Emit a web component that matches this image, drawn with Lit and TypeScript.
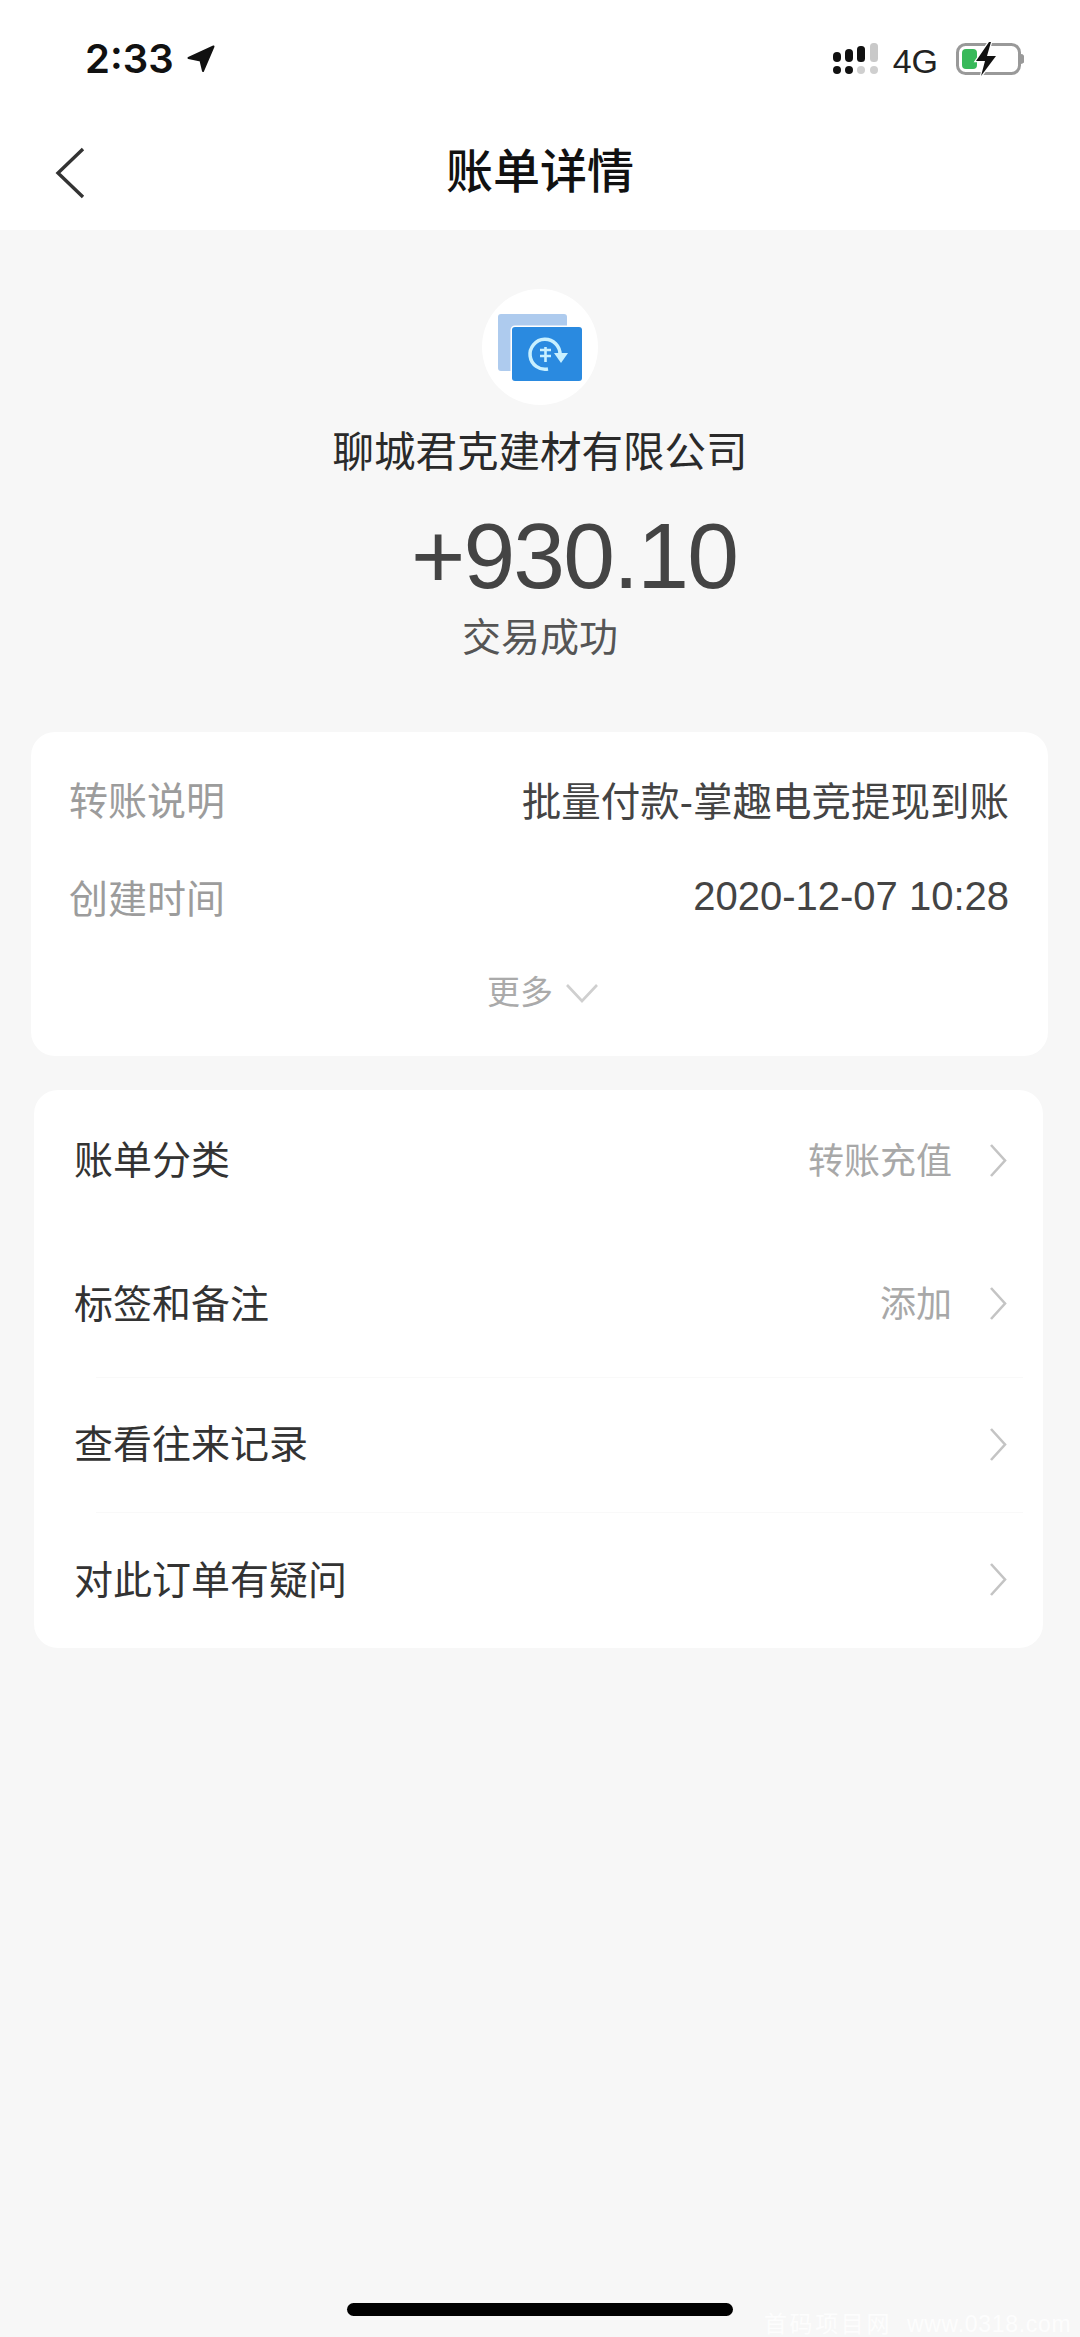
import { LitElement, html, css, svg } from "lit";
import { customElement } from "lit/decorators.js";

const chevronRight = svg`<path d="M2 1 L16 16.5 L2 32" fill="none" stroke="#c4c4c4" stroke-width="2.6"/>`;

interface Row { label: string; value?: string; cls: string; }
const ROWS: Row[] = [
  { label: "账单分类", value: "转账充值", cls: "r1" },
  { label: "标签和备注", value: "添加", cls: "r2" },
  { label: "查看往来记录", cls: "r3 line" },
  { label: "对此订单有疑问", cls: "r4 line" },
];

@customElement("app-root")
export class AppRoot extends LitElement {
  static styles = css`
    :host {
      display: flex;
      flex-direction: column;
      width: 1080px;
      height: 2337px;
      position: relative;
      overflow: hidden;
      background: #f7f7f7;
      font-family: "Liberation Sans", "Noto Sans CJK SC", sans-serif;
      color: #333;
    }
    .top { background: #fff; height: 230px; display: flex; flex-direction: column; flex: none; }
    .status { height: 118px; display: flex; justify-content: space-between; padding: 42px 56px 0 85px; box-sizing: border-box; }
    .time-wrap { display: flex; gap: 13px; height: 34px; align-items: center; }
    .time { font-family: Inter, "Liberation Sans", sans-serif; font-size: 40px; font-weight: 600; color: #111; line-height: 34px; letter-spacing: 0; }
    .sys { display: flex; height: 34px; align-items: center; }
    .net { font-size: 34px; color: #222; margin: 0 18px 0 15px; line-height: 34px; padding-top: 3px; }
    .nav { flex: 1; display: flex; align-items: center; justify-content: center; position: relative; padding-bottom: 4px; }
    .back { position: absolute; left: 54px; top: 29px; }
    .title { font-size: 47px; font-weight: 500; color: #111; line-height: 56px; }
    .hero { display: flex; flex-direction: column; align-items: center; padding-top: 59px; flex: none; }
    .avatar { width: 116px; height: 116px; border-radius: 50%; background: #fff; flex: none; }
    .name { font-size: 41.5px; line-height: 50px; margin-top: 23px; color: #2a2a2a; }
    .amount { font-size: 93px; line-height: 100px; margin-top: 28px; padding-left: 68px; letter-spacing: -1.8px; color: #444; }
    .state { font-size: 39px; line-height: 46px; margin-top: 9px; color: #555; }
    .card { background: #fff; border-radius: 24px; flex: none; }
    .info { margin: 71px 32px 0 31px; height: 324px; padding: 43px 39px 0 38px; box-sizing: border-box; }
    .kv { display: flex; justify-content: space-between; align-items: center; height: 46px; font-size: 39px; }
    .kv + .kv { margin-top: 52px; }
    .k { color: #9c9c9c; }
    .v { color: #444; font-size: 39.5px; }
    .date { font-size: 40px; }
    .more { display: flex; align-items: center; justify-content: center; gap: 12px; margin-top: 54px; padding-left: 8px; color: #aaa; font-size: 33px; line-height: 40px; }
    .list { margin: 34px 37px 0 34px; height: 558px; display: flex; flex-direction: column; }
    .row { display: flex; align-items: center; position: relative; padding: 0 36px 0 40px; box-sizing: border-box; font-size: 39px; color: #333; flex: none; }
    .r1 { height: 141px; }
    .r2 { height: 146px; }
    .r3 { height: 135px; }
    .r4 { height: 136px; }
    .line::before { content: ""; position: absolute; top: 0; left: 62px; right: 20px; height: 1px; background: #f9f9f9; }
    .row .label { flex: 1; padding-bottom: 7px; }
    .row .val { color: #a8a8a8; font-size: 36px; margin-right: 37px; padding-bottom: 6px; }
    .home { position: absolute; left: 347px; top: 2303px; width: 386px; height: 13px; border-radius: 7px; background: #000; }
    .mark { position: absolute; left: 764px; top: 2312px; font-size: 23px; line-height: 24px; color: #fff; opacity: 0.8; white-space: nowrap; display: flex; gap: 15px; }
    .mark-cn { letter-spacing: 2.6px; }
    .mark-url { letter-spacing: 0.7px; }
    svg { display: block; flex: none; }
  `;

  render() {
    return html`
      <div class="top">
        <div class="status">
          <div class="time-wrap">
            <span class="time">2:33</span>
            <svg width="28" height="28" viewBox="0 0 28 28"><path d="M26.5 1.5 L1.5 13 L13.5 15.5 L16 26 Z" fill="#111" stroke="#111" stroke-width="2" stroke-linejoin="round"/></svg>
          </div>
          <div class="sys">
            <svg width="46" height="32" viewBox="0 0 46 32">
              <rect x="1" y="9" width="8" height="10" rx="4" fill="#111"/>
              <rect x="13" y="6" width="8" height="13" rx="4" fill="#111"/>
              <rect x="25" y="3" width="8" height="16" rx="3.5" fill="#111"/>
              <rect x="38" y="0" width="8" height="19" rx="3.5" fill="#c9c9c9"/>
              <rect x="1" y="23" width="8" height="8" rx="4" fill="#111"/>
              <rect x="13" y="23" width="8" height="8" rx="4" fill="#111"/>
              <rect x="25" y="23" width="8" height="8" rx="4" fill="#cfcfcf"/>
              <rect x="38" y="23" width="8" height="8" rx="4" fill="#cfcfcf"/>
            </svg>
            <span class="net">4G</span>
            <svg width="68" height="34" viewBox="0 0 68 34">
              <rect x="1.5" y="2.5" width="62" height="29" rx="8" fill="none" stroke="#999" stroke-width="3"/>
              <path d="M65 12 a4 5 0 0 1 0 10 Z" fill="#999"/>
              <rect x="6" y="7" width="15" height="20" rx="4" fill="#38b95a"/>
              <path d="M33 0 L20 19 L29 19 L25 34 L40 14 L31 14 L35 0 Z" fill="#111" stroke="#fff" stroke-width="2.5" paint-order="stroke"/>
            </svg>
          </div>
        </div>
        <div class="nav">
          <svg class="back" width="32" height="52" viewBox="0 0 32 52"><path d="M29 2 L4 26 L29 50" fill="none" stroke="#333" stroke-width="3.4"/></svg>
          <span class="title">账单详情</span>
        </div>
      </div>

      <div class="hero">
        <div class="avatar">
          <svg width="116" height="116" viewBox="0 0 116 116">
            <rect x="16" y="25" width="69" height="57" rx="3" fill="#aecbee"/>
            <rect x="30" y="38" width="70" height="54" rx="3" fill="#2a8ae0" stroke="#fff" stroke-width="3" paint-order="stroke"/>
            <path d="M78 66 A15 15 0 1 0 66 80" fill="none" stroke="#c8f0ff" stroke-width="3.5"/>
            <path d="M58 61 H69 M58 67 H69 M63.5 58 V73" stroke="#c8f0ff" stroke-width="2.6" fill="none"/>
            <path d="M72 64 H86 L79 74 Z" fill="#c8f0ff"/>
          </svg>
        </div>
        <div class="name">聊城君克建材有限公司</div>
        <div class="amount">+930.10</div>
        <div class="state">交易成功</div>
      </div>

      <div class="card info">
        <div class="kv"><span class="k">转账说明</span><span class="v">批量付款-掌趣电竞提现到账</span></div>
        <div class="kv"><span class="k">创建时间</span><span class="v date">2020-12-07 10:28</span></div>
        <div class="more">
          <span>更多</span>
          <svg width="34" height="20" viewBox="0 0 34 20"><path d="M2 2 L17 18 L32 2" fill="none" stroke="#cfcfcf" stroke-width="2.6"/></svg>
        </div>
      </div>

      <div class="card list">
        ${ROWS.map(
          (r) => html`<div class="row ${r.cls}">
            <span class="label">${r.label}</span>
            ${r.value ? html`<span class="val">${r.value}</span>` : ""}
            <svg width="18" height="34" viewBox="0 0 18 34">${chevronRight}</svg>
          </div>`
        )}
      </div>

      <div class="home"></div>
      <div class="mark"><span class="mark-cn">首码项目网</span><span class="mark-url">www.0318.com</span></div>
    `;
  }
}
